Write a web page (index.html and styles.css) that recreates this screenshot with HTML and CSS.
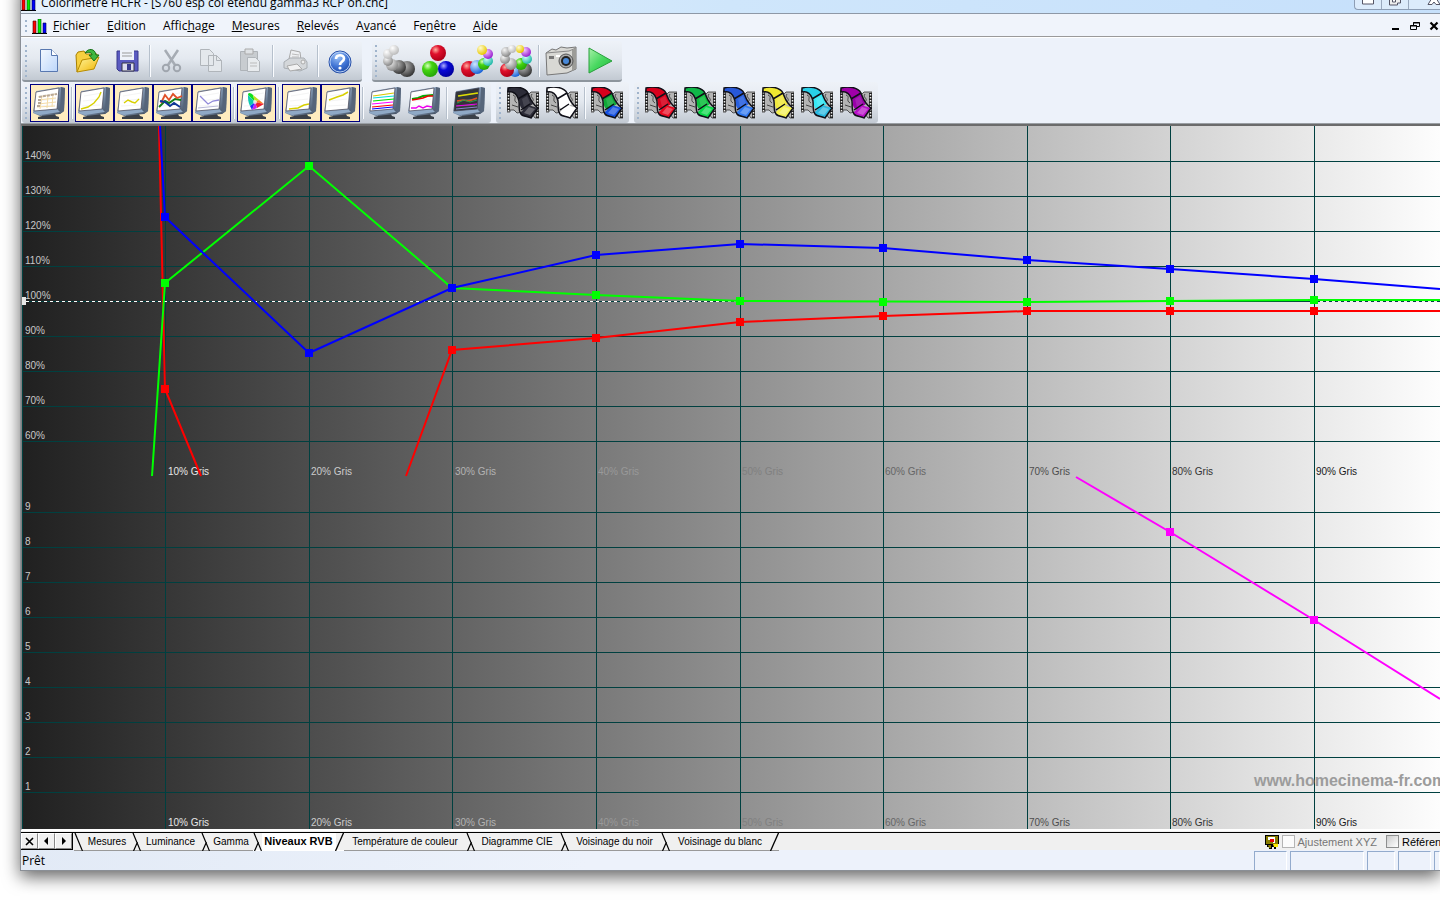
FILE: index.html
```
<!DOCTYPE html>
<html lang="fr">
<head>
<meta charset="utf-8">
<title>Colorimètre HCFR</title>
<link rel="stylesheet" href="styles.css">
</head>
<body>
<svg class="defs" aria-hidden="true">
  <defs>
    <linearGradient id="bezel" x1="0" y1="0" x2="1" y2="1"><stop offset="0" stop-color="#b9d0e4"/><stop offset=".5" stop-color="#7e93ad"/><stop offset="1" stop-color="#394454"/></linearGradient>
    <linearGradient id="page" x1="0" y1="0" x2="1" y2="1"><stop offset="0" stop-color="#f4f9ff"/><stop offset="1" stop-color="#bcd6fb"/></linearGradient>
    <linearGradient id="folder" x1="0" y1="0" x2="1" y2="1"><stop offset="0" stop-color="#fff6a0"/><stop offset="1" stop-color="#f0b400"/></linearGradient>
    <radialGradient id="hb" cx=".4" cy=".25" r=".8"><stop offset="0" stop-color="#9cc3f8"/><stop offset=".6" stop-color="#3c70d2"/><stop offset="1" stop-color="#1c46a0"/></radialGradient>
    <radialGradient id="bw" cx=".35" cy=".3" r=".7"><stop offset="0" stop-color="#fff"/><stop offset="1" stop-color="#bbb"/></radialGradient>
    <radialGradient id="bg" cx=".35" cy=".3" r=".7"><stop offset="0" stop-color="#f4f4f4"/><stop offset="1" stop-color="#888"/></radialGradient>
    <radialGradient id="bk" cx=".35" cy=".3" r=".7"><stop offset="0" stop-color="#bbb"/><stop offset="1" stop-color="#383838"/></radialGradient>
    <radialGradient id="br" cx=".35" cy=".3" r=".7"><stop offset="0" stop-color="#ffb0a0"/><stop offset=".4" stop-color="#e0102c"/><stop offset="1" stop-color="#b00018"/></radialGradient>
    <radialGradient id="bgr" cx=".35" cy=".3" r=".7"><stop offset="0" stop-color="#d8ffc0"/><stop offset=".4" stop-color="#44d410"/><stop offset="1" stop-color="#28a808"/></radialGradient>
    <radialGradient id="bb" cx=".35" cy=".3" r=".7"><stop offset="0" stop-color="#b0b0ff"/><stop offset=".4" stop-color="#0808d8"/><stop offset="1" stop-color="#0000a0"/></radialGradient>
    <radialGradient id="bl" cx=".35" cy=".3" r=".7"><stop offset="0" stop-color="#d0e8ff"/><stop offset="1" stop-color="#1c64d8"/></radialGradient>
    <radialGradient id="by" cx=".35" cy=".3" r=".7"><stop offset="0" stop-color="#fffbd0"/><stop offset="1" stop-color="#e8c800"/></radialGradient>
    <radialGradient id="bm" cx=".35" cy=".3" r=".7"><stop offset="0" stop-color="#f4c8ff"/><stop offset="1" stop-color="#9a20d0"/></radialGradient>
    <radialGradient id="bc" cx=".35" cy=".3" r=".7"><stop offset="0" stop-color="#d0fff8"/><stop offset="1" stop-color="#20b8a8"/></radialGradient>
    <linearGradient id="play" x1="0" y1="0" x2="1" y2="1"><stop offset="0" stop-color="#a8f0a8"/><stop offset=".5" stop-color="#48d860"/><stop offset="1" stop-color="#20b838"/></linearGradient>
    <linearGradient id="ramp" x1="0" y1="0" x2="1" y2="0"><stop offset="0" stop-color="#202020"/><stop offset="1" stop-color="#fdfdfd"/></linearGradient>
    <symbol id="monitor" viewBox="0 0 32 32">
      <path d="M9 27h13l1 2 3 1v2H5v-2l4-1z" fill="#3a4048"/>
      <path d="M3 4L28 0l4 1-1 23-4 3-20 2-7-3z" fill="url(#bezel)"/>
      <path d="M28 0l4 1-1 23-4 3z" fill="#56657a"/>
      <path d="M1 24l23-2 3 3-20 3-6-2z" fill="#8fa9c6"/>
      <path d="M3 5l23-4-2 21-23 2z" fill="var(--screen,#fff)" stroke="#445" stroke-width=".7"/>
      <path d="M6 9l18-3M5 14l18-2M4 19l18-1" stroke="#ddd" stroke-width=".5" opacity=".6"/>
    </symbol>
    <symbol id="film" viewBox="0 0 32 32">
      <path d="M0 3h3l3 3 5 0 4 3 6-1 3-3h8v26h-4l-3-4-5 1-4-3-6 1-3-3H3v2H0z" fill="#b4b4b4" stroke="#333" stroke-width=".8"/>
      <path d="M1.500 4v20M30.500 6v25" stroke="#222" stroke-width="3"/>
      <path d="M1.500 5v19M30.500 7v24" stroke="#eee" stroke-width="1.500" stroke-dasharray="1.500 1.500"/>
      <path d="M6 8c5 2-1 5 4 8M5 18l6 2M25 7c-3 4 4 4 0 8" fill="none" stroke="#444"/>
      <path d="M1 1C8-1 18 0 21 6l-9 6C9 6 5 4 1 5z" fill="var(--c1)"/>
      <path d="M12 12l9-6c2 4 2 7 5 11l-9 6c-5-2-4-7-5-11z" fill="var(--c2)"/>
      <path d="M13 26l8-8 10 3-7 10-7-2z" fill="var(--c3)"/>
      <path d="M17 26l5-6 6 2-5 6z" fill="#fff" opacity=".28"/>
      <path d="M15 12l5-3 3 7-6 4z" fill="#fff" opacity=".12"/>
      <path d="M11 12l10-6M14 23l9-6M1 1C8-1 18 0 21 6c2 5 3 10 10 15l-7 10c-3-2-8-1-10-4-4-5 0-11-3-16C9 6 5 4 1 5z" fill="none" stroke="#101018" stroke-width="1.500"/>
    </symbol>
    <symbol id="bars" viewBox="0 0 15 15">
      <path d="M0 14.500h15" stroke="#000"/><path d="M1 2h3v12H1z" fill="#f00" stroke="#400" stroke-width=".6"/><path d="M6 0h3v14H6z" fill="#0e0" stroke="#040" stroke-width=".6"/><path d="M11 4h3v10h-3z" fill="#00f" stroke="#004" stroke-width=".6"/>
    </symbol>
    <symbol id="slant" viewBox="0 0 9 18"><path d="M1 0l7.500 18" fill="none" stroke="#000" stroke-width="1.200"/></symbol>
    <symbol id="joint" viewBox="0 0 9 18"><path d="M1 0l7.500 18M5.500 9L1.500 18" fill="none" stroke="#000" stroke-width="1.200"/></symbol>
    <symbol id="rise" viewBox="0 0 9 18"><path d="M8.500 0L.5 18" fill="none" stroke="#000" stroke-width="1.300"/></symbol>
  </defs>
</svg>

<main class="window">
  <header class="titlebar">
    <svg class="app-icon"><use href="#bars"/></svg>
    <h1 class="title">Colorimètre HCFR - [S760 esp col étendu gamma3 RCP on.chc]</h1>
    <div class="caption">
      <button class="cap" aria-label="Réduire"><svg width="14" height="8"><path d="M1.500-4h11v8h-11z" fill="#fff" stroke="#556"/></svg></button>
      <button class="cap" aria-label="Restaurer"><svg width="14" height="8"><path d="M4.500-6h8v9h-3v2h-8V-4h3z" fill="#eee" stroke="#556"/><path d="M4.500-2h3v4h-3z" fill="#fff" stroke="#556"/></svg></button>
      <button class="cap cap-close" aria-label="Fermer"><svg width="14" height="8"><path d="M1 4.500L5-2h4l4 6.500H9L7 2 5 4.500z" fill="#fff" stroke="#556"/></svg></button>
    </div>
  </header>

  <nav class="menubar">
    <span class="grip"></span>
    <svg class="app-icon"><use href="#bars"/></svg>
    <button class="menu"><u>F</u>ichier</button>
    <button class="menu"><u>E</u>dition</button>
    <button class="menu">Affic<u>h</u>age</button>
    <button class="menu"><u>M</u>esures</button>
    <button class="menu"><u>R</u>elevés</button>
    <button class="menu">A<u>v</u>ancé</button>
    <button class="menu">Fe<u>n</u>être</button>
    <button class="menu"><u>A</u>ide</button>
    <div class="mdi">
      <button aria-label="Réduire le document"><svg width="10" height="10"><path d="M1 7h7v2H1z"/></svg></button>
      <button aria-label="Restaurer le document"><svg width="10" height="10"><path d="M3.500 4V1.500h6v4H7M3 2h7M.5 4.500h6v4h-6zM0 5h7" fill="none" stroke="#000"/></svg></button>
      <button aria-label="Fermer le document"><svg width="10" height="10"><path d="M1.500 1.500l7 7M8.500 1.500l-7 7" stroke="#000" stroke-width="2.200"/></svg></button>
    </div>
  </nav>

  <div class="toolrow toolrow-main">
    <div class="toolbar">
      <span class="grip"></span>
      <button class="tool" aria-label="Nouveau"><svg viewBox="0 0 32 32"><path d="M7.500 4.500h11l6 6v16h-17z" fill="url(#page)" stroke="#5878b0"/><path d="M18.500 4.500v6h6" fill="#fff" stroke="#5878b0"/></svg></button>
      <button class="tool" aria-label="Ouvrir"><svg viewBox="0 0 32 32"><path d="M5 27L4 10l2-3 6-1 2 3 11 0v4" fill="#f6d040" stroke="#a88000"/><path d="M5 27l5-12 17-3-5 12z" fill="url(#folder)" stroke="#b88c00"/><path d="M13 8c3-5 10-5 11 2h3l-5 6-5-6h3c0-3-4-3-7-2z" fill="#40b840" stroke="#187018"/></svg></button>
      <button class="tool" aria-label="Enregistrer"><svg viewBox="0 0 32 32"><path d="M6 6h21v20H8l-2-2z" fill="#5a5ac0" stroke="#38388c"/><path d="M9 5h14v10H9z" fill="#eef2fa"/><path d="M11 8h10M11 11h10" stroke="#999"/><path d="M11 18h12v8H11z" fill="#dde" stroke="#334"/><path d="M16 19h4v6h-4z" fill="#38388c"/></svg></button>
      <span class="sep"></span>
      <button class="tool" aria-label="Couper" disabled><svg viewBox="0 0 32 32"><path d="M9 5l10 15M22 5L12 20" stroke="#a6acb4" stroke-width="2.500" fill="none"/><circle cx="10" cy="23" r="3.200" fill="none" stroke="#a0a6ae" stroke-width="2"/><circle cx="21" cy="23" r="3.200" fill="none" stroke="#a0a6ae" stroke-width="2"/></svg></button>
      <button class="tool" aria-label="Copier" disabled><svg viewBox="0 0 32 32"><path d="M5.500 4.500h9l4 4v12h-13zM13.500 10.500h8l5 5v11h-13z" fill="#e4e8ec" stroke="#b0b5ba"/><path d="M21.500 10.500v5h5" fill="none" stroke="#b0b5ba"/></svg></button>
      <button class="tool" aria-label="Coller" disabled><svg viewBox="0 0 32 32"><path d="M6.500 6.500h17v19h-17z" fill="#c8ccd0" stroke="#aeb3b8"/><path d="M11 4h8v5h-8z" fill="#dfe2e5" stroke="#aaa"/><path d="M13.500 12.500h8l4 4v10h-12z" fill="#e8ebee" stroke="#b0b5ba"/><path d="M16 18h7M16 21h7" stroke="#bbb"/></svg></button>
      <span class="sep"></span>
      <button class="tool" aria-label="Imprimer" disabled><svg viewBox="0 0 32 32"><path d="M10 14l2-9 9 2 1 8" fill="#eef0f2" stroke="#aaa"/><path d="M5 17l6-4h14l3 4v6l-7 3-16-3z" fill="#d4d7da" stroke="#a8adb2"/><path d="M8 21l10-2 5 5-12 2z" fill="#f2f2f2" stroke="#aaa"/><path d="M13 9l7 1M13 12l7 0" stroke="#bbb"/><circle cx="24" cy="17" r="2" fill="#eee" stroke="#aaa"/></svg></button>
      <span class="sep"></span>
      <button class="tool" aria-label="Aide"><svg viewBox="0 0 32 32"><circle cx="16" cy="17" r="11" fill="url(#hb)" stroke="#2850a8"/><circle cx="16" cy="17" r="10" fill="none" stroke="#b8d0f4"/><path d="M12 14c0-5 8-5 8-.5 0 3-4 3-4 6.500" fill="none" stroke="#fff" stroke-width="2.600"/><circle cx="16" cy="23" r="1.600" fill="#fff"/></svg></button>
    </div>
    <div class="toolbar">
      <span class="grip"></span>
      <button class="tool" aria-label="Mesurer les gris"><svg viewBox="0 0 32 32"><circle cx="24" cy="24" r="8" fill="url(#bk)"/><circle cx="16" cy="22" r="7" fill="url(#bk)"/><circle cx="9" cy="20" r="6" fill="url(#bg)"/><circle cx="5" cy="16" r="5" fill="url(#bg)"/><circle cx="5" cy="9" r="5" fill="url(#bw)"/><circle cx="11" cy="5" r="5" fill="url(#bw)"/></svg></button>
      <button class="tool" aria-label="Mesurer les primaires"><svg viewBox="0 0 32 32"><circle cx="16" cy="8" r="8" fill="url(#br)"/><circle cx="8" cy="24" r="8" fill="url(#bgr)"/><circle cx="24" cy="24" r="8" fill="url(#bb)"/></svg></button>
      <button class="tool" aria-label="Mesurer les secondaires"><svg viewBox="0 0 32 32"><circle cx="8" cy="24" r="8" fill="url(#br)"/><circle cx="16" cy="22" r="7" fill="url(#bl)"/><circle cx="23" cy="19" r="6" fill="url(#bgr)"/><circle cx="27" cy="16" r="5" fill="url(#bc)"/><circle cx="27" cy="9" r="5" fill="url(#bm)"/><circle cx="21" cy="5" r="5" fill="url(#by)"/></svg></button>
      <button class="tool" aria-label="Mesurer tout"><svg viewBox="0 0 32 32"><circle cx="15" cy="26" r="6" fill="url(#bl)"/><circle cx="7" cy="25" r="7" fill="url(#br)"/><circle cx="25" cy="25" r="7" fill="url(#bk)"/><circle cx="21" cy="19" r="6" fill="url(#bgr)"/><circle cx="11" cy="19" r="6" fill="url(#bg)"/><circle cx="5" cy="14" r="5" fill="url(#bg)"/><circle cx="27" cy="14" r="5" fill="url(#bc)"/><circle cx="6" cy="7" r="5" fill="url(#bg)"/><circle cx="26" cy="7" r="5" fill="url(#bm)"/><circle cx="12" cy="4" r="4" fill="url(#bw)"/><circle cx="20" cy="4" r="4" fill="url(#by)"/></svg></button>
      <span class="sep"></span>
      <button class="tool" aria-label="Capturer"><svg viewBox="0 0 32 32"><path d="M1 8l6-4 4 1 5-3 6 1 9-1v22l-9 4-20 2z" fill="#d8d8d4" stroke="#777"/><path d="M1 8l23-2 7-3" fill="none" stroke="#888"/><path d="M27 5l4-2v20l-4 3z" fill="#9c9c98"/><circle cx="21" cy="16" r="7" fill="#aaa" stroke="#555"/><circle cx="21" cy="16" r="5" fill="#222"/><circle cx="21" cy="16" r="3" fill="#4888d8"/><path d="M4 11h5v3H4z" fill="#777"/><path d="M11 10h4v2h-4z" fill="#fff"/></svg></button>
      <button class="tool" aria-label="Démarrer"><svg viewBox="0 0 32 32"><path d="M5 3l23 13L5 28z" fill="url(#play)" stroke="#28a03c"/></svg></button>
    </div>
  </div>

  <div class="toolrow toolrow-views">
    <div class="toolbar">
      <span class="grip"></span>
      <button class="tool on" aria-label="Vue mesures"><svg viewBox="0 0 32 32"><use href="#monitor"/><path d="M5 10l18-3M5 13l18-2M5 17l18-2M4 20l18-1M9 9L7 22M15 8l-1 13M20 7l-1 13" stroke="#f4dca8" fill="none"/><path d="M6 10l18-3M5 13h3M5 16h3M4 19h3" stroke="#b8a898" stroke-width="2" stroke-dasharray="3 1"/></svg></button>
      <span class="sep"></span>
      <button class="tool on" aria-label="Vue luminance"><svg viewBox="0 0 32 32"><use href="#monitor"/><path d="M3 22l7-2 6-4 5-6 2-5" fill="none" stroke="#d8d000" stroke-width="1.400"/></svg></button>
      <button class="tool on" aria-label="Vue gamma"><svg viewBox="0 0 32 32"><use href="#monitor"/><path d="M7 16l4-3 4 2 3 1 4-4" fill="none" stroke="#d8d000" stroke-width="1.400"/></svg></button>
      <button class="tool on" aria-label="Vue niveaux RVB"><svg viewBox="0 0 32 32"><use href="#monitor"/><path d="M3 20l6-6 4 2 6-4 6 1" fill="none" stroke="#108018" stroke-width="2"/><path d="M5 16l4-8 4 5 4-6 4 4 5-2" fill="none" stroke="#e05028" stroke-width="1.800"/><path d="M4 14l5 1 5 4 4-3 6 4" fill="none" stroke="#103898" stroke-width="2"/></svg></button>
      <button class="tool on" aria-label="Vue température"><svg viewBox="0 0 32 32"><use href="#monitor"/><path d="M5 9l8 8 5-3 6-1" fill="none" stroke="#9088d8" stroke-width="1.300"/><path d="M3 21l20-2" stroke="#b8b8d8"/></svg></button>
      <span class="sep"></span>
      <button class="tool on" aria-label="Vue diagramme CIE"><svg viewBox="0 0 32 32"><use href="#monitor"/><path d="M8 8c0-3 3-2 5 0l2 7z" fill="#10e020"/><path d="M13 8l6 5-4 2z" fill="#c0e020"/><path d="M19 13l5 4-9-2z" fill="#ff8020"/><path d="M24 17l-7 4-2-6z" fill="#f02030"/><path d="M17 21l-5 2 3-8z" fill="#d020f0"/><path d="M12 23l-2-4 5-4z" fill="#2030ff"/><path d="M10 19C8 15 8 12 8 8l7 7z" fill="#10c8b0"/><circle cx="15" cy="15" r="2" fill="#fff" opacity=".7"/></svg></button>
      <span class="sep"></span>
      <button class="tool on" aria-label="Vue voisinage du noir"><svg viewBox="0 0 32 32"><use href="#monitor"/><path d="M4 22l9-1 6-3 5-1" fill="none" stroke="#d8d000" stroke-width="1.500"/></svg></button>
      <button class="tool on" aria-label="Vue voisinage du blanc"><svg viewBox="0 0 32 32"><use href="#monitor"/><path d="M5 13l8-3 6-2 5-3" fill="none" stroke="#d8d000" stroke-width="1.500"/></svg></button>
      <span class="sep"></span>
      <button class="tool" aria-label="Courbes combinées"><svg viewBox="0 0 32 32"><use href="#monitor"/><g fill="none" stroke-width="1.200"><path d="M4 9l21-3" stroke="#d8c800"/><path d="M4 11l21-2" stroke="#0dd"/><path d="M4 14l21-2" stroke="#0d0"/><path d="M3 17l21-2" stroke="#f0f"/><path d="M3 20l21-2" stroke="#f00"/><path d="M3 22l21-2" stroke="#00f"/></g></svg></button>
      <button class="tool" aria-label="Niveaux combinés"><svg viewBox="0 0 32 32"><use href="#monitor"/><path d="M4 12l6-1 5-2 10-1" stroke="#0a0" fill="none" stroke-width="2"/><path d="M4 13l6-1 5-1 5-2 5 0" stroke="#e00" fill="none" stroke-width="1.600"/><path d="M3 21h5l3-2 4 2 4-2 5 1" stroke="#e0e" fill="none" stroke-width="1.400"/></svg></button>
      <span class="sep"></span>
      <button class="tool dark" aria-label="Vue combinée libre"><svg viewBox="0 0 32 32"><use href="#monitor"/><path d="M5 9l20-3" stroke="#dd0" fill="none" stroke-width="1.400"/><path d="M4 14l6-1 6 1 8-3" stroke="#e05020" fill="none" stroke-width="1.600"/><path d="M4 16l7-3 6 2 7-2" stroke="#28a048" fill="none"/><path d="M3 19l21-2" stroke="#e0e"/><path d="M3 22l21-2" stroke="#88c"/></svg></button>
    </div>
    <div class="toolbar">
      <span class="grip"></span>
      <button class="tool f-black" aria-label="Film noir"><svg><use href="#film"/></svg></button>
      <button class="tool f-white" aria-label="Film blanc"><svg><use href="#film"/></svg></button>
      <span class="sep"></span>
      <button class="tool f-rgb" aria-label="Film RVB"><svg><use href="#film"/></svg></button>
    </div>
    <div class="toolbar">
      <span class="grip"></span>
      <button class="tool f-red" aria-label="Film rouge"><svg><use href="#film"/></svg></button>
      <button class="tool f-green" aria-label="Film vert"><svg><use href="#film"/></svg></button>
      <button class="tool f-blue" aria-label="Film bleu"><svg><use href="#film"/></svg></button>
      <button class="tool f-yellow" aria-label="Film jaune"><svg><use href="#film"/></svg></button>
      <button class="tool f-cyan" aria-label="Film cyan"><svg><use href="#film"/></svg></button>
      <button class="tool f-magenta" aria-label="Film magenta"><svg><use href="#film"/></svg></button>
    </div>
  </div>

  <section class="chart-frame">
    <svg class="chart" viewBox="22 126 1418 703" role="img" aria-label="Niveaux RVB">
      <rect x="22" y="126" width="1418" height="703" fill="url(#ramp)"/>
      <g class="grid">
        <path d="M22.500 126v703"/>
        <path d="M22 161.500h1418M22 196.500h1418M22 231.500h1418M22 266.500h1418M22 301.500h1418M22 336.500h1418M22 371.500h1418M22 406.500h1418M22 441.500h1418"/>
        <path d="M22 512.500h1418M22 547.500h1418M22 582.500h1418M22 617.500h1418M22 652.500h1418M22 687.500h1418M22 722.500h1418M22 757.500h1418M22 792.500h1418"/>
        <path d="M165.500 126v703M309.500 126v703M452.500 126v703M596.500 126v703M740.500 126v703M883.500 126v703M1027.500 126v703M1170.500 126v703M1314.500 126v703"/>
      </g>
      <path class="reference" d="M26 301.500h714"/>
      <path class="reference-gap" d="M1314 301.500h126"/>
      <rect x="22" y="297" width="4" height="8" fill="#e8e8e8"/>
      <g class="scale">
        <text x="25" y="159">140%</text><text x="25" y="194">130%</text><text x="25" y="229">120%</text><text x="25" y="264">110%</text><text x="25" y="299">100%</text><text x="25" y="334">90%</text><text x="25" y="369">80%</text><text x="25" y="404">70%</text><text x="25" y="439">60%</text>
        <text x="25" y="510">9</text><text x="25" y="545">8</text><text x="25" y="580">7</text><text x="25" y="615">6</text><text x="25" y="650">5</text><text x="25" y="685">4</text><text x="25" y="720">3</text><text x="25" y="755">2</text><text x="25" y="790">1</text>
      </g>
      <g class="levels">
        <g fill="#e6e6e6"><text x="168" y="475">10% Gris</text><text x="168" y="826">10% Gris</text></g>
        <g fill="#cccccc"><text x="311" y="475">20% Gris</text><text x="311" y="826">20% Gris</text></g>
        <g fill="#b3b3b3"><text x="455" y="475">30% Gris</text><text x="455" y="826">30% Gris</text></g>
        <g fill="#999999"><text x="598" y="475">40% Gris</text><text x="598" y="826">40% Gris</text></g>
        <g fill="#808080"><text x="742" y="475">50% Gris</text><text x="742" y="826">50% Gris</text></g>
        <g fill="#666666"><text x="885" y="475">60% Gris</text><text x="885" y="826">60% Gris</text></g>
        <g fill="#4d4d4d"><text x="1029" y="475">70% Gris</text><text x="1029" y="826">70% Gris</text></g>
        <g fill="#333333"><text x="1172" y="475">80% Gris</text><text x="1172" y="826">80% Gris</text></g>
        <g fill="#1a1a1a"><text x="1316" y="475">90% Gris</text><text x="1316" y="826">90% Gris</text></g>
      </g>
      <g class="curve red"><path d="M159 126L165 389L201 476M406 476L452 350L596 338L740 322L883 316L1027 311H1440"/><path class="marks" d="M161 389h8M448 350h8M592 338h8M736 322h8M879 316h8M1023 311h8M1166 311h8M1310 311h8"/></g>
      <g class="curve green"><path d="M152 476L165 283L309 166L452 288L596 295L740 301L1027 302L1170 301L1314 300H1440"/><path class="marks" d="M161 283h8M305 166h8M448 288h8M592 295h8M736 301h8M879 302h8M1023 302h8M1166 301h8M1310 300h8"/></g>
      <g class="curve blue"><path d="M160 126L165 217L309 353L452 288L596 255L740 244L883 248L1027 260L1170 269L1314 279L1440 289"/><path class="marks" d="M161 217h8M305 353h8M448 288h8M592 255h8M736 244h8M879 248h8M1023 260h8M1166 269h8M1310 279h8"/></g>
      <g class="curve magenta"><path d="M1076 477L1170 532L1314 620L1440 699"/><path class="marks" d="M1166 532h8M1310 620h8"/></g>
      <text class="watermark" x="1254" y="786">www.homecinema-fr.com</text>
    </svg>
  </section>

  <div class="tabstrip">
    <div class="scrollers">
      <button aria-label="Fermer l'onglet"><svg width="9" height="9"><path d="M1 1l7 7M8 1L1 8" stroke="#000" stroke-width="1.600"/></svg></button>
      <button aria-label="Onglet précédent"><svg width="9" height="9"><path d="M6 0v8L2 4z"/></svg></button>
      <button aria-label="Onglet suivant"><svg width="9" height="9"><path d="M3 0v8l4-4z"/></svg></button>
    </div>
    <div class="tabs">
      <button class="tab w58"><svg class="edge"><use href="#slant"/></svg>Mesures</button>
      <button class="tab w69"><svg class="edge"><use href="#joint"/></svg>Luminance</button>
      <button class="tab w52"><svg class="edge"><use href="#joint"/></svg>Gamma</button>
      <button class="tab w91 current"><svg class="edge"><use href="#joint"/></svg>Niveaux RVB<svg class="edge edge-end"><use href="#rise"/></svg></button>
      <button class="tab w122 after">Température de couleur</button>
      <button class="tab w94"><svg class="edge"><use href="#joint"/></svg>Diagramme CIE</button>
      <button class="tab w101"><svg class="edge"><use href="#joint"/></svg>Voisinage du noir</button>
      <button class="tab w118 last"><svg class="edge"><use href="#joint"/></svg>Voisinage du blanc<svg class="edge edge-end"><use href="#rise"/></svg></button>
    </div>
    <div class="options">
      <svg width="14" height="14"><path d="M0 0h14v9h-1v3h-2v2H9v-2H7v2H4v-2H2v-2H0z" fill="#000"/><path d="M1 1h12v8H1z" fill="#887c00"/><path d="M3 2h7v6H8V5H3z" fill="#fff"/><path d="M5 4h4v3H5z" fill="#e00"/><path d="M8 9h5v3H9z" fill="#fe0"/><path d="M3 10h3v3H4z" fill="#887c00"/></svg>
      <label class="off"><input type="checkbox" disabled>Ajustement XYZ</label>
      <label class="ref"><input type="checkbox">Référence</label>
    </div>
  </div>

  <footer class="statusbar">
    <span class="ready">Prêt</span>
    <div class="panes"><span class="pane p33"></span><span class="pane p74"></span><span class="pane p28"></span><span class="pane p33"></span><span class="pane p6"></span></div>
  </footer>
</main>
</body>
</html>
```
FILE: styles.css
```
* { box-sizing: border-box; }
body { margin: 0; min-height: 100vh; display: flow-root; background: #fff; overflow: hidden; font: 12px/16px "Open Sans", "Noto Sans", sans-serif; color: #000; }
button { border: 0; padding: 0; margin: 0; background: none; font: inherit; color: inherit; }
svg { display: block; flex: none; }
.defs { position: absolute; width: 0; height: 0; }

.window { margin: -20px 0 0 20px; border: 1px solid #8a8f96; background: #edf2fa; box-shadow: 0 6px 16px rgba(0, 0, 0, .6); border-right: 0; }

.titlebar { display: flex; align-items: flex-end; height: 33px; padding-bottom: 2px; overflow: hidden; background: linear-gradient(90deg, #e6f1fc, #cfe6fb 50%, #c6e0fb); border-bottom: 1px solid #8e98a6; }
.app-icon { width: 15px; height: 15px; }
.title { margin: 0 0 0 5px; font-size: 12px; font-weight: 400; line-height: 16px; white-space: nowrap; }
.caption { display: flex; align-self: flex-start; margin-left: auto; height: 29px; border: 1px solid #8d9db4; border-right: 0; border-radius: 0 0 0 4px; background: #dcebfb; }
.cap { display: flex; justify-content: center; align-items: flex-end; width: 27px; padding-bottom: 1px; border-right: 1px solid #9aa9bf; }
.cap-close { width: 31px; border: 0; padding-left: 18px; overflow: hidden; }

.menubar { display: flex; align-items: center; height: 23px; padding: 2px 0 0 4px; border-bottom: 1px solid #9a9a9a; background: #f0f4fb; }
.grip { flex: none; width: 2px; background: repeating-linear-gradient(#a0b4cc 0 2px, transparent 2px 5px); }
.menubar .grip { height: 12px; margin-right: 5px; }
.menu { margin-left: 6px; margin-right: 11px; }
.mdi { display: flex; gap: 9px; margin: 0 1px 0 auto; }

.toolrow { display: flex; align-items: flex-start; padding-left: 1px; }
.toolrow-main { gap: 10px; padding-top: 3px; height: 45px; border-top: 1px solid #fff; }
.toolrow-views { gap: 5px; height: 42px; border-bottom: 1px solid #9a9fa4; }
.toolbar { display: flex; align-items: center; height: 41px; padding-right: 2px; border-radius: 3px; background: linear-gradient(#eef2f8, #e4e9f0 45%, #c2c9d2); }
.toolrow-main .toolbar { border-bottom: 2px solid #8d959d; }
.toolbar .grip { height: 32px; margin: 0 3px; }
.tool { display: flex; flex: none; align-items: center; justify-content: center; width: 39px; height: 38px; padding-right: 2px; }
.tool svg { width: 32px; height: 32px; }
.on { border: 1px solid #000080; background: #ffecbf; }
.sep { flex: none; width: 2px; height: 32px; margin: 0 2px; border-left: 1px solid #b6c0cc; border-right: 1px solid #fafcff; }
.dark { --screen: #33353a; }
.f-black { --c1: #2c2c38; --c2: #2c2c38; --c3: #2c2c38; }
.f-white { --c1: #fff; --c2: #fff; --c3: #fff; }
.f-rgb { --c1: #d8001c; --c2: #10a838; --c3: #1450e0; }
.f-red { --c1: #d8001c; --c2: #d8001c; --c3: #e80820; }
.f-green { --c1: #10b848; --c2: #10c040; --c3: #08d848; }
.f-blue { --c1: #2858d8; --c2: #2860e0; --c3: #3078f0; }
.f-yellow { --c1: #f0e830; --c2: #f0e840; --c3: #f4f050; }
.f-cyan { --c1: #28d0e8; --c2: #38e8f4; --c3: #28b8e0; }
.f-magenta { --c1: #a000a8; --c2: #9800a8; --c3: #b810c8; }

.chart-frame { border-top: 2px solid #6b6b6b; border-left: 1px solid #808080; border-bottom: 1px solid #fff; background: #fff; }
.chart { width: 100%; height: auto; font: 10px "Liberation Sans", Arial, sans-serif; }
.grid { stroke: #004040; fill: none; }
.reference { stroke: #fff; stroke-dasharray: 3 3; fill: none; }
.reference-gap { stroke: #eee; stroke-dasharray: 3 3; fill: none; }
.scale { fill: #c8c8c8; }
.curve { fill: none; stroke-width: 2; }
.marks { stroke-width: 8; }
.red { stroke: #f00; }
.green { stroke: #0f0; }
.blue { stroke: #00f; }
.magenta { stroke: #f0f; }
.watermark { font: bold 16px "Liberation Sans", Arial, sans-serif; fill: #9c9c9c; }

.tabstrip { display: flex; height: 20px; padding-top: 1px; background: #f0f0f0; border-top: 1px solid #fff; font: 10px/17px "Liberation Sans", Arial, sans-serif; }
.scrollers { display: flex; height: 18px; border: 1px solid #000; border-left: 0; }
.scrollers button { display: flex; align-items: center; justify-content: center; width: 17px; border: 1px solid #fff; border-right-color: #888; border-bottom-color: #888; background: #f0f0f0; }
.tabs { display: flex; padding-left: 1px; flex: 1; border-top: 1px solid #000; height: 19px; }
.tab { position: relative; flex: none; height: 18px; padding-left: 8px; border-bottom: 1px solid #999; text-align: center; white-space: nowrap; }
.edge { position: absolute; left: 0; top: 0; width: 9px; height: 18px; }
.edge-end { left: auto; right: 0; }
.current { background: linear-gradient(#fff, #fff) 9px 0 / 74px 18px no-repeat; border-color: #fff; font-size: 11px; font-weight: 700; padding: 0; }
.after, .last { padding: 0; }
.w52 { width: 52px; }
.w58 { width: 58px; }
.w69 { width: 69px; }
.w91 { width: 91px; }
.w94 { width: 94px; }
.w101 { width: 101px; }
.w118 { width: 118px; }
.w122 { width: 122px; }
.options { display: flex; align-items: center; gap: 3px; border-top: 1px solid #000; font: 11px/16px "Liberation Sans", Arial, sans-serif; white-space: nowrap; }
.options label { display: flex; align-items: center; gap: 3px; }
.options input { appearance: none; flex: none; width: 13px; height: 13px; margin: 0; border: 1px solid #8e8f8f; background: linear-gradient(135deg, #ccc, #fff); }
.options .off { color: #777; }
.options .off input { border-color: #b4b4b4; background: #fbfbfb; }
.options .ref { width: 54px; margin-left: 6px; overflow: hidden; }

.statusbar { display: flex; justify-content: space-between; height: 20px; background: linear-gradient(90deg, #e2eaf6, #edf2fb 40%); }
.ready { padding: 3px 0 0 1px; line-height: 16px; }
.panes { display: flex; gap: 3px; padding-top: 1px; }
.pane { border-top: 1px solid #93abcd; border-left: 1px solid #93abcd; border-right: 1px solid #fff; }
.p33 { width: 33px; }
.p74 { width: 74px; }
.p28 { width: 28px; }
.p6 { width: 6px; }
```
